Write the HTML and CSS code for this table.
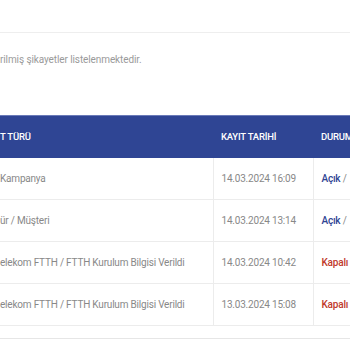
FILE: index.html
```html
<!DOCTYPE html>
<html lang="tr">
<head>
  <meta charset="UTF-8">
  <title>Şikayetlerim</title>
  <link rel="stylesheet" href="styles.css">
</head>
<body>

  <div class="topbar"></div>

  <p class="intro">rilmiş şikayetler listelenmektedir.</p>

  <table class="records">
    <thead>
      <tr>
        <th class="col-type">T TÜRÜ</th>
        <th class="col-date">KAYIT TARİHİ</th>
        <th class="col-state">DURUM</th>
      </tr>
    </thead>
    <tbody>
      <tr>
        <td> Kampanya</td>
        <td>14.03.2024 16:09</td>
        <td><span class="open">Açık</span> /</td>
      </tr>
      <tr>
        <td>ür / Müşteri</td>
        <td>14.03.2024 13:14</td>
        <td><span class="open">Açık</span> /</td>
      </tr>
      <tr>
        <td>elekom FTTH / FTTH Kurulum Bilgisi Verildi</td>
        <td>14.03.2024 10:42</td>
        <td><span class="closed">Kapalı /</span></td>
      </tr>
      <tr>
        <td>elekom FTTH / FTTH Kurulum Bilgisi Verildi</td>
        <td>13.03.2024 15:08</td>
        <td><span class="closed">Kapalı /</span></td>
      </tr>
    </tbody>
  </table>

  <div class="footer-line"></div>

</body>
</html>
```

FILE: styles.css
```css
body {
  font-family: 'Roboto', sans-serif;
  background-color: #fff;
  color: #888;
  margin: 0;
  padding: 0;
  width: 350px;
  overflow: hidden;
}
.topbar {
  height: 32px;
  border-bottom: 1px solid #eeeeee;
}
.intro {
  font-size: 10px;
  letter-spacing: -0.1px;
  color: #9a9a9a;
  margin: 0;
  padding: 20px 0 0;
  height: 62px;
  line-height: 14px;
}
.records {
  width: 350px;
  border-collapse: collapse;
  table-layout: fixed;
  border-top: 1px solid #6a7ab8;
}
.records th,
.records td {
  box-sizing: border-box;
  text-align: left;
  height: 42px;
  padding: 0 8px;
  white-space: nowrap;
  overflow: hidden;
}
.records th {
  background-color: #2f4594;
  color: #fff;
  font-size: 9.5px;
  font-weight: 500;
  letter-spacing: -0.2px;
}
.records .col-type {
  width: 213px;
}
.records .col-date {
  width: 100px;
}
.records td {
  font-size: 10px;
  letter-spacing: -0.2px;
  border-bottom: 1px solid #ececec;
  border-left: 1px solid #ececec;
}
.records th:first-child,
.records td:first-child {
  padding-left: 0;
  border-left: none;
}
.records td:last-child {
  padding-right: 0;
  text-overflow: clip;
}
.open {
  color: #2f4594;
  font-weight: 500;
}
.closed {
  color: #c0392b;
  font-weight: 500;
}
.footer-line {
  margin-top: 12px;
  border-top: 1px solid #e6e6e6;
}
```
